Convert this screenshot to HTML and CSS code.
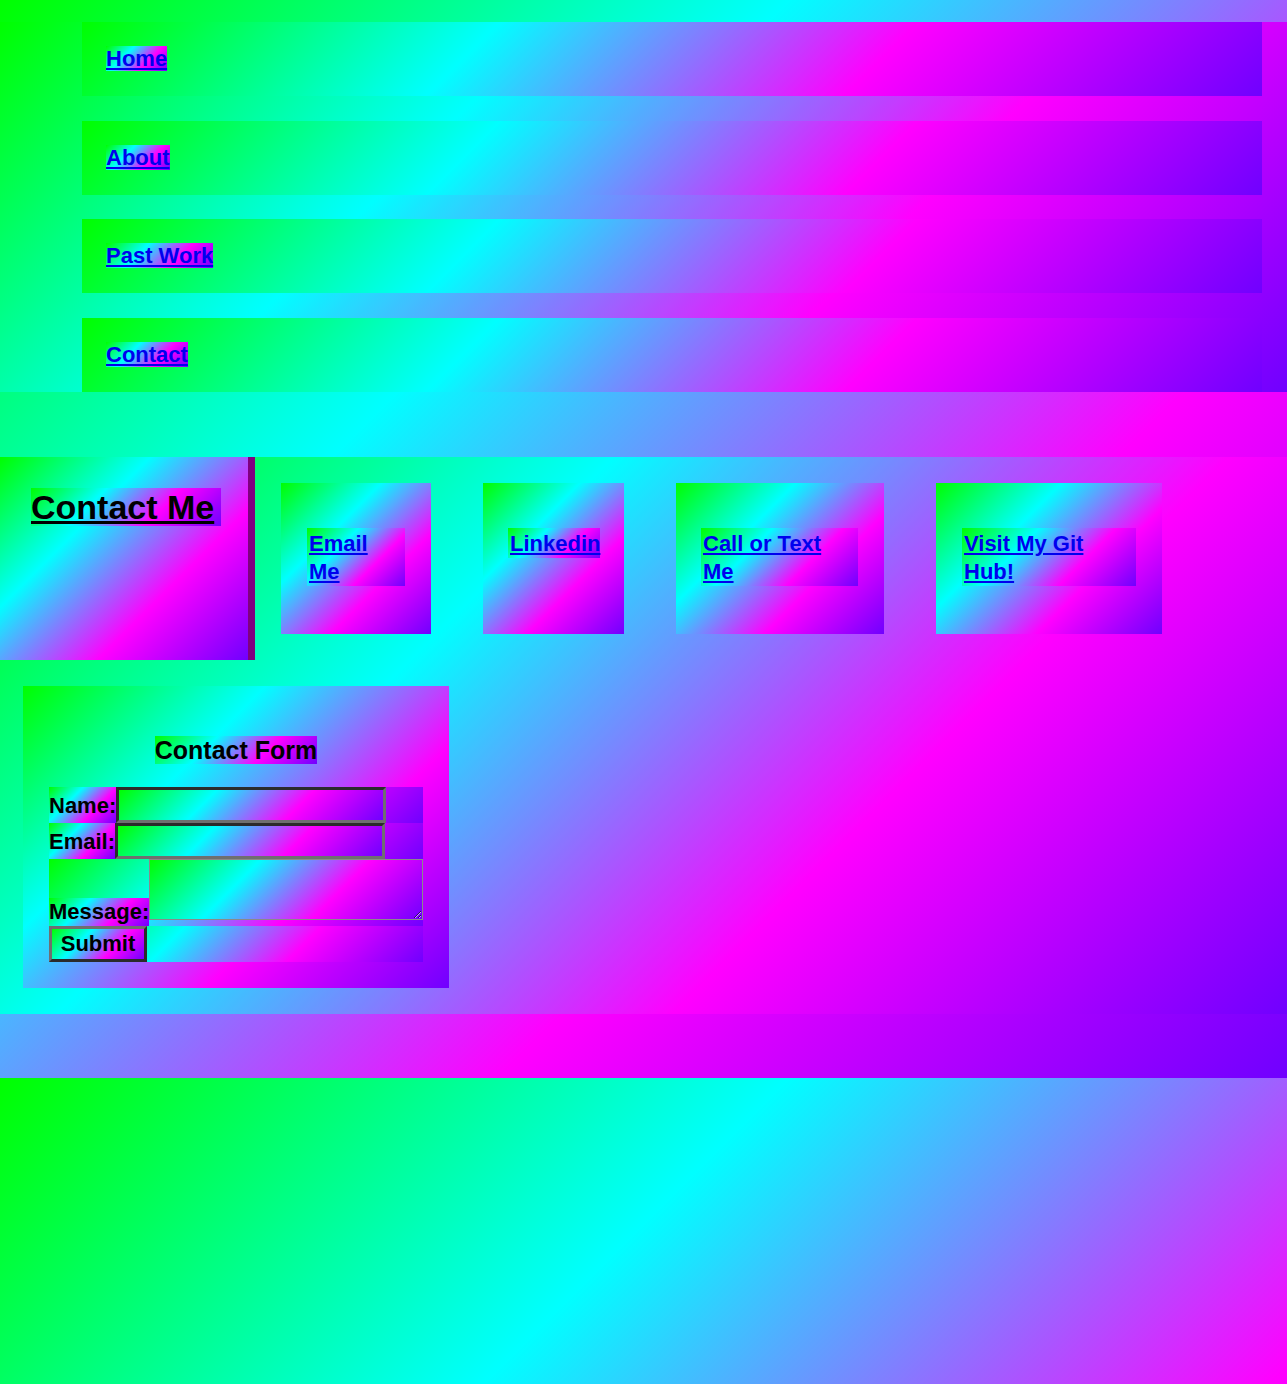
FILE: index.html
```html
<!DOCTYPE html>
<html lang="en">
<head>
<meta charset="utf-8">
<title>Contact Me</title>
<link rel="stylesheet" href="styles.css">
</head>
<body>
<header class="site-header">
  <nav class="site-nav">
    <ul class="nav-list">
      <li class="nav-item"><a class="nav-link" href="#">Home</a></li>
      <li class="nav-item"><a class="nav-link" href="#">About</a></li>
      <li class="nav-item"><a class="nav-link" href="#">Past Work</a></li>
      <li class="nav-item"><a class="nav-link" href="#">Contact</a></li>
    </ul>
  </nav>
</header>
<main class="main">
  <section class="contact">
    <div class="contact-title">
      <h1 class="contact-heading"><span class="contact-heading-text">Contact Me</span></h1>
    </div>
    <div class="contact-links">
      <div class="card card--email"><p class="card-text card-text--email"><a class="card-link" href="#">Email Me</a></p></div>
      <div class="card card--linkedin"><p class="card-text card-text--linkedin"><a class="card-link" href="#">Linkedin</a></p></div>
      <div class="card card--call"><p class="card-text card-text--call"><a class="card-link" href="#">Call or Text Me</a></p></div>
      <div class="card card--git"><p class="card-text card-text--git"><a class="card-link" href="#">Visit My Git Hub!</a></p></div>
    </div>
  </section>
  <form class="contact-form" action="#">
    <h2 class="form-title"><span class="form-title-text">Contact Form</span></h2>
    <div class="form-row form-row--line">
      <label class="form-label form-label--name" for="name">Name:</label><input class="form-input" id="name" type="text">
    </div>
    <div class="form-row form-row--line">
      <label class="form-label" for="email">Email:</label><input class="form-input" id="email" type="email">
    </div>
    <div class="form-row form-row--area">
      <label class="form-label" for="message">Message:</label><textarea class="form-textarea" id="message"></textarea>
    </div>
    <div class="form-row">
      <button class="form-submit" type="submit">Submit</button>
    </div>
  </form>
</main>
</body>
</html>
```

FILE: styles.css
```css
:root {
  --rainbow: linear-gradient(135deg, #00ff00, #00ffff, #ff00ff, #7000ff);
}

html {
  background: var(--rainbow);
}

body {
  margin: 0;
  padding: 22px 0 64px;
  font-family: "Liberation Sans", Arial, sans-serif;
}

/* ---------- navigation ---------- */
.nav-list {
  list-style: none;
  margin: 0;
  padding: 0 25px 0 82px;
  display: flex;
  flex-direction: column;
  gap: 24.67px;
  background: var(--rainbow);
}

.nav-item {
  height: 74px;
  line-height: 74px;
  padding: 0 24px;
  background: var(--rainbow);
}

.nav-link {
  font-size: 22px;
  font-weight: bold;
  color: #0000ee;
  background: var(--rainbow);
}

/* ---------- main ---------- */
.main {
  display: flow-root;
  margin-top: 65px;
  background: var(--rainbow);
}

.contact {
  display: flex;
  height: 203px;
}

.contact-title {
  box-sizing: border-box;
  width: 255px;
  padding: 31px 0 0 31px;
  border-right: 7px solid #800080;
  background: var(--rainbow);
  background-origin: padding-box;
}

.contact-heading {
  margin: 0;
  font-size: 34px;
  line-height: 39px;
  font-weight: bold;
  color: #000;
}

.contact-heading-text {
  padding-right: 7px;
  text-decoration: underline;
  background: var(--rainbow);
}

.contact-links {
  display: flex;
  align-items: stretch;
  gap: 52px;
  padding: 26px 0 26px 26px;
}

.card {
  padding: 45px 26px 0;
  background: var(--rainbow);
}

.card--linkedin {
  padding-left: 25px;
  padding-right: 24px;
}

.card--call {
  padding-left: 25px;
}

.card-text {
  margin: 0;
  padding: 2px 2px 0;
  font-size: 22px;
  font-weight: bold;
  line-height: 28px;
  background: var(--rainbow);
}

.card-text--email { width: 94px; }
.card-text--linkedin { width: 88px; }
.card-text--call { width: 153px; }
.card-text--git { width: 170px; }

.card-link {
  color: #0000ee;
}

/* ---------- form ---------- */
.contact-form {
  box-sizing: border-box;
  width: 426px;
  margin: 26px 0 26px 23px;
  padding: 26px;
  background: var(--rainbow);
}

.form-title {
  margin: 23px 0 22px;
  font-size: 25px;
  line-height: 30px;
  font-weight: bold;
  text-align: center;
  color: #000;
}

.form-title-text {
  background: var(--rainbow);
}

.form-row {
  display: flex;
  background: var(--rainbow);
}

.form-row--line,
.form-row--area {
  align-items: flex-end;
}

.form-label {
  font-size: 22px;
  font-weight: bold;
  line-height: 28px;
  color: #000;
  background: var(--rainbow);
}

.form-row--line .form-label {
  padding: 5px 0 3px;
}

.form-label--name {
  padding-right: 1px;
}

.form-input {
  box-sizing: border-box;
  width: 270px;
  height: 36px;
  margin: 0;
  padding: 1px 2px;
  font: 13.33px "Liberation Sans", Arial, sans-serif;
  border: 3px solid;
  border-color: #2b2b2b #6f6f6f #6f6f6f #2b2b2b;
  background: var(--rainbow);
}

.form-textarea {
  box-sizing: border-box;
  flex: 1;
  height: 61px;
  margin: 0 0 6px;
  border: 1px solid #8a8a8a;
  font: 13.33px "Liberation Mono", monospace;
  background: var(--rainbow);
}

.form-submit {
  box-sizing: border-box;
  width: 98px;
  height: 36px;
  margin: 0;
  padding: 0;
  font: bold 22px "Liberation Sans", Arial, sans-serif;
  color: #000;
  border: 3px solid;
  border-color: #6f6f6f #2b2b2b #2b2b2b #6f6f6f;
  background: var(--rainbow);
}
```
